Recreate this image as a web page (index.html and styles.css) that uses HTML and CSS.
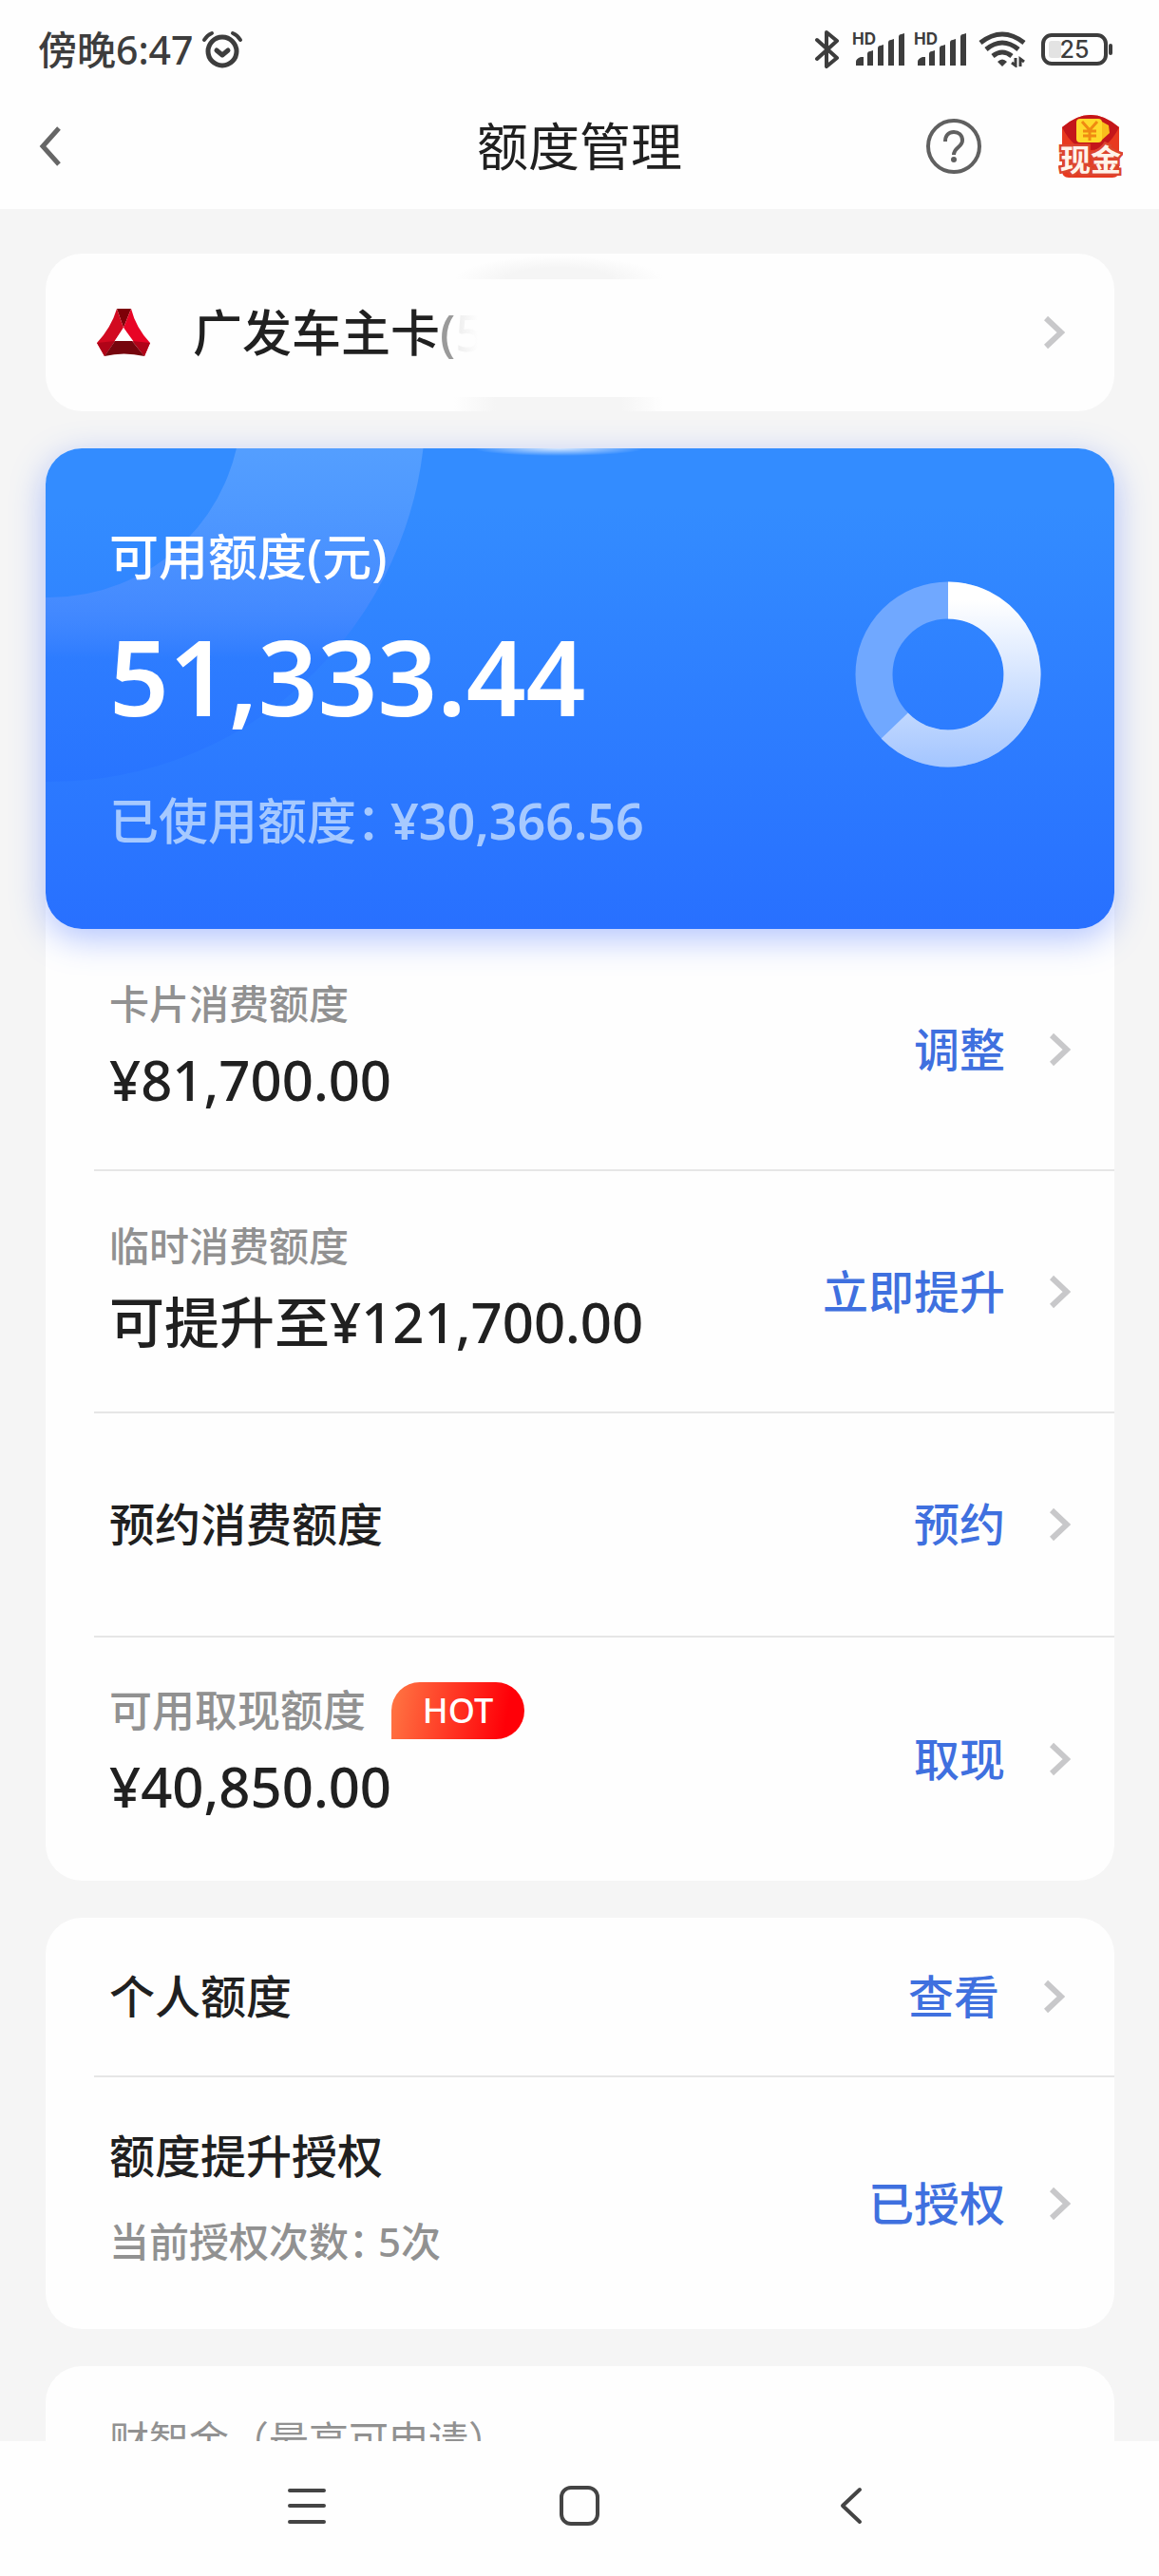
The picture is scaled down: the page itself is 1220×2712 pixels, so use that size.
FILE: index.html
```
<!DOCTYPE html>
<html lang="zh-CN">
<head>
<meta charset="utf-8">
<meta name="viewport" content="width=device-width, initial-scale=1">
<title>额度管理</title>
<link rel="stylesheet" href="styles.css">
</head>
<body>
<svg class="defs" width="0" height="0" aria-hidden="true">
  <symbol id="chevron" viewBox="0 0 22 36"><path d="M2 3 18 18 2 33" fill="none" stroke="#c8c8ca" stroke-width="6"/></symbol>
  <symbol id="signal" viewBox="0 0 52 34">
    <path d="M1 34v-4q0-3 5-5h3v9zM13 34V22q0-3 3-3l3-1v16zM24 34V16q0-3 3-3l3-1v22zM35 34V10q0-3 3-3l3-1v28zM46 34V4q0-3 3-3l3-1v34z" fill="#3d3d3d"/>
  </symbol>
</svg>
<div class="screen">
  <div class="status">
    <div class="status-left">
      <span class="time">傍晚6:47</span>
      <svg width="44" height="40" viewBox="0 0 44 40" fill="none" stroke="#3d3d3d" stroke-linecap="round">
        <circle cx="22" cy="22" r="15" stroke-width="5"/>
        <path d="M3 10Q6 5 11 3M41 10Q38 5 33 3" stroke-width="4"/>
        <path d="m16 21 6 5 6-5" stroke-width="5" stroke-linejoin="round"/>
      </svg>
    </div>
    <div class="status-right">
      <svg width="26" height="42" viewBox="0 0 26 42" fill="none" stroke="#3d3d3d" stroke-width="4" stroke-linejoin="round" stroke-linecap="round"><path d="M2 11 23 30 12 39V3l11 9L2 31"/></svg>
      <span class="cell"><span class="hd">HD</span><svg class="bars" width="52" height="34"><use href="#signal"/></svg></span>
      <span class="cell"><span class="hd">HD</span><svg class="bars" width="52" height="34"><use href="#signal"/></svg></span>
      <svg class="wifi" width="50" height="38" viewBox="0 0 50 38" fill="none" stroke="#3d3d3d" stroke-width="5">
        <path d="M2 12Q25-6 48 12M8 19Q25 5 42 19M15 26Q25 18 35 26"/>
        <path d="M20 32q5-5 10 0l-5 5z" fill="#3d3d3d" stroke="none"/>
        <path d="M39 28v8l-4-3M44 37v-8l4 3" stroke-width="3"/>
      </svg>
      <svg class="battery" width="76" height="34" viewBox="0 0 76 34">
        <rect x="2" y="2" width="66" height="30" rx="9" fill="none" stroke="#3d3d3d" stroke-width="4"/>
        <rect x="8" y="8" width="13" height="18" rx="3" fill="#e3e3e3"/>
        <rect x="71" y="11" width="4" height="12" rx="2" fill="#3d3d3d"/>
        <text x="35" y="26" text-anchor="middle" class="level">25</text>
      </svg>
    </div>
  </div>

  <header class="header">
    <button class="icon-btn" aria-label="返回">
      <svg width="28" height="44" viewBox="0 0 28 44"><path d="M24 3 7 22l17 19" fill="none" stroke="#666" stroke-width="5"/></svg>
    </button>
    <h1>额度管理</h1>
    <div class="tools">
      <button class="icon-btn" aria-label="帮助">
        <svg width="60" height="60" viewBox="0 0 60 60" fill="none" stroke="#606060" stroke-width="4">
          <circle cx="30" cy="30" r="27"/>
          <path d="M21 25c0-7 4-10 9-10s9 3 9 9c0 7-9 7-9 15"/>
          <circle cx="30" cy="44" r="3" fill="#606060" stroke="none"/>
        </svg>
      </button>
      <button class="icon-btn" aria-label="现金">
        <svg width="68" height="68" viewBox="0 0 68 68">
          <path d="M4 14Q34-12 64 14V60q0 7-7 7H11q-7 0-7-7z" fill="#e8391f"/>
          <path d="M4 14Q34-12 64 14Q52 38 34 38T4 14z" fill="#c4161a"/>
          <path d="m44 7 9 5 1 8-10 9z" fill="#f9bd1c"/>
          <rect x="19" y="5" width="27" height="25" rx="4" fill="#ffd92b"/>
          <path d="m25 8 8 9 8-9M33 17v11M26 18h14M26 23h14" fill="none" stroke="#f08a12" stroke-width="3"/>
          <text x="34" y="60" class="cash" text-anchor="middle">现金</text>
        </svg>
      </button>
    </div>
  </header>

  <main class="main">
    <a class="card picker" href="#card">
      <svg width="56" height="50" viewBox="0 0 56 50">
        <path d="M21 0h15L28 20z" fill="#7d0008"/>
        <path d="M21 0 28 20 8 50 0 36Q15 20 21 0z" fill="#d20a20"/>
        <path d="M36 0 28 20 50 50l6-14Q41 20 36 0z" fill="#e80425"/>
        <path d="M0 36 19 34 8 50zM56 36 37 34l13 16z" fill="#b00418"/>
        <path d="M19 34h18l13 16Q28 45 8 50z" fill="#76060d"/>
        <path d="m28 20-9 14h18z" fill="#fff"/>
      </svg>
      <span class="card-name">广发车主卡<span class="fade-a">(</span><span class="fade-b">5</span></span>
      <svg class="chev" width="22" height="36"><use href="#chevron"/></svg>
      <span class="smudge smudge-top"></span>
      <span class="smudge smudge-bottom"></span>
    </a>

    <section class="card">
      <div class="summary">
        <svg class="ring" width="404" height="356" viewBox="0 0 404 356">
          <defs><linearGradient id="rg" gradientUnits="userSpaceOnUse" x1="0" y1="0" x2="0" y2="356">
            <stop offset="0" stop-color="#fff" stop-opacity=".16"/>
            <stop offset=".4" stop-color="#c4b4ff" stop-opacity=".15"/>
            <stop offset=".62" stop-color="#2a70ff" stop-opacity=".3"/>
            <stop offset="1" stop-color="#2068ff" stop-opacity=".3"/>
          </linearGradient></defs>
          <circle cx="4" cy="-45" r="299" fill="none" stroke="url(#rg)" stroke-width="194"/>
        </svg>
        <div class="summary-text">
          <p class="summary-label">可用额度(元)</p>
          <p class="summary-value">51,333.44</p>
          <p class="summary-used"><span>已使用额度：</span><span class="used-amount">¥30,366.56</span></p>
        </div>
        <svg class="donut" width="196" height="196" viewBox="0 0 196 196" fill="none">
          <defs><linearGradient id="dg" gradientUnits="userSpaceOnUse" x1="0" y1="0" x2="0" y2="196">
            <stop offset=".1" stop-color="#fff"/><stop offset="1" stop-color="#a3c5ff"/>
          </linearGradient></defs>
          <circle cx="98" cy="98" r="78" stroke="#70a8ff" stroke-width="39"/>
          <path d="M98 20A78 78 0 1 1 41.700 152" stroke="url(#dg)" stroke-width="39"/>
        </svg>
        <span class="smudge smudge-blue"></span>
      </div>
      <div class="rows">
        <a class="row" href="#adjust">
          <span class="info"><span class="label">卡片消费额度</span><span class="value">¥81,700.00</span></span>
          <span class="action">调整</span><svg width="22" height="36"><use href="#chevron"/></svg>
        </a>
        <a class="row" href="#raise">
          <span class="info"><span class="label">临时消费额度</span><span class="value">可提升至¥121,700.00</span></span>
          <span class="action">立即提升</span><svg width="22" height="36"><use href="#chevron"/></svg>
        </a>
        <a class="row row-single" href="#book">
          <span class="info name">预约消费额度</span>
          <span class="action">预约</span><svg width="22" height="36"><use href="#chevron"/></svg>
        </a>
        <a class="row row-cash" href="#cash">
          <span class="info"><span class="label label-lg">可用取现额度<span class="hot">HOT</span></span><span class="value">¥40,850.00</span></span>
          <span class="action">取现</span><svg width="22" height="36"><use href="#chevron"/></svg>
        </a>
      </div>
    </section>

    <section class="card">
      <a class="row row-slim" href="#personal">
        <span class="info name">个人额度</span>
        <span class="action">查看</span><svg width="22" height="36"><use href="#chevron"/></svg>
      </a>
      <a class="row row-auth" href="#auth">
        <span class="info"><span class="name">额度提升授权</span><span class="note"><span>当前授权次数：</span><span>5次</span></span></span>
        <span class="action">已授权</span><svg width="22" height="36"><use href="#chevron"/></svg>
      </a>
    </section>

    <section class="card more"><p class="more-label">财智金（最高可申请）</p></section>
  </main>

  <nav class="sysnav">
    <button class="icon-btn" aria-label="最近任务"><svg width="42" height="42" viewBox="0 0 42 42"><path d="M3 5h36M3 21h36M3 38h36" stroke="#444" stroke-width="4" stroke-linecap="round"/></svg></button>
    <button class="icon-btn" aria-label="主屏幕"><svg width="42" height="42" viewBox="0 0 42 42"><rect x="2" y="2" width="38" height="38" rx="10" fill="none" stroke="#444" stroke-width="4"/></svg></button>
    <button class="icon-btn" aria-label="后退"><svg width="42" height="42" viewBox="0 0 42 42"><path d="M29 4 11 21l18 17" fill="none" stroke="#444" stroke-width="4" stroke-linecap="round" stroke-linejoin="round"/></svg></button>
  </nav>
</div>
</body>
</html>
```
FILE: styles.css
```
* { box-sizing: border-box; }
body {
  margin: 0;
  background: #f5f5f5;
  color: #202020;
  font-family: "Noto Sans", "Noto Sans CJK SC", sans-serif;
  font-weight: 500;
}
p, h1 { margin: 0; }
a { color: inherit; text-decoration: none; }
svg { display: block; flex: none; }
.defs { position: absolute; }
.screen { display: flex; flex-direction: column; height: 100vh; }

.status {
  display: flex;
  flex: none;
  justify-content: space-between;
  align-items: center;
  height: 104px;
  padding: 0 48px 0 40px;
  background: #fefefe;
  color: #3d3d3d;
}
.status-left { display: flex; align-items: center; gap: 8px; }
.time { font-size: 41px; line-height: 60px; }
.status-right { display: flex; align-items: center; gap: 13px; }
.cell { position: relative; display: flex; padding-left: 3px; }
.hd {
  position: absolute;
  left: 0;
  top: 0;
  font: 700 17px/12px Inter, sans-serif;
}
.cell + .cell { margin-left: -3px; }
.battery { margin-left: 3px; }
.level { font: 500 25px Inter, "Noto Sans", sans-serif; fill: #3d3d3d; }

.header {
  display: grid;
  grid-template-columns: 1fr auto 1fr;
  flex: none;
  align-items: center;
  height: 116px;
  padding: 0 38px 16px 38px;
  background: #fefefe;
}
.header h1 { font-size: 54px; line-height: 80px; font-weight: 400; }
.tools { display: flex; justify-content: flex-end; align-items: center; gap: 80px; }
.icon-btn {
  display: flex;
  justify-content: center;
  align-items: center;
  justify-self: start;
  padding: 0;
  border: 0;
  background: none;
}
.cash {
  font: 700 32px "Noto Sans CJK SC", sans-serif;
  fill: #fff3ea;
  stroke: #dc452f;
  stroke-width: 5px;
  paint-order: stroke;
}

.main {
  display: flex;
  flex: 1;
  flex-direction: column;
  gap: 39px;
  min-height: 0;
  padding: 47px 47px 0 48px;
  overflow: hidden;
}
.card { flex: none; border-radius: 38px; background: #fefefe; }
.picker {
  position: relative;
  display: flex;
  align-items: center;
  gap: 45px;
  padding: 44px 52px 44px 54px;
}
.card-name { flex: 1; font-size: 52px; line-height: 78px; }
.fade-a { color: #9a9a9a; }
.fade-b {
  background: linear-gradient(90deg, #ececec, #fefefe 80%);
  background-clip: text;
  color: transparent;
}
.smudge { position: absolute; }
.smudge-top {
  left: 430px;
  top: 0;
  width: 220px;
  height: 27px;
  background: radial-gradient(ellipse 50% 90% at 50% 100%, #f5f5f5 50%, #f5f5f500);
}
.smudge-bottom {
  left: 430px;
  bottom: 0;
  width: 220px;
  height: 15px;
  background: linear-gradient(90deg, #f5f5f500, #f5f5f5 20%, #f5f5f5 80%, #f5f5f500);
}
.smudge-blue {
  left: 450px;
  top: 0;
  width: 180px;
  height: 8px;
  background: radial-gradient(ellipse 50% 100% at 50% 0, #ffffffcc, #ffffff00);
}

.summary {
  position: relative;
  display: flex;
  justify-content: space-between;
  padding: 75px 77px 75px 67px;
  border-radius: 38px;
  overflow: hidden;
  background: linear-gradient(#338cff, #338cff 12%, #2e7fff 50%, #2870ff);
  box-shadow: 0 10px 36px rgba(62, 108, 255, .4);
  color: #fff;
}
.ring { position: absolute; left: 0; top: 0; }
.summary-text { position: relative; }
.summary-label { font-size: 52px; line-height: 78px; }
.summary-value { margin-top: 16px; font-size: 110px; font-weight: 600; line-height: 140px; }
.summary-used {
  display: flex;
  gap: 10px;
  margin-top: 44px;
  font-size: 52px;
  line-height: 78px;
  color: #a6c9ff;
  font-feature-settings: "halt";
}
.used-amount { font-weight: 600; }
.donut { margin-top: 65px; }

.row {
  display: flex;
  align-items: center;
  margin-left: 51px;
  padding: 0 46px 0 16px;
  border-bottom: 2px solid #e6e6e6;
}
.row:last-child { border-bottom: 0; }
.info { flex: 1; padding: 50px 0 55px; }
.label, .value { display: block; }
.label { font-size: 42px; line-height: 58px; color: #919191; }
.label-lg { display: flex; align-items: center; gap: 27px; font-size: 45px; }
.value { margin-top: 12px; font-size: 58px; line-height: 78px; }
.name { display: block; font-size: 48px; line-height: 58px; }
.action { margin-right: 47px; font-size: 48px; line-height: 58px; color: #3f70df; }
.hot {
  width: 140px;
  margin: -1px 0;
  border-radius: 30px 30px 30px 0;
  background: linear-gradient(100deg, #ff7744, #ff0008 85%);
  color: #fff;
  font-size: 36px;
  line-height: 60px;
  text-align: center;
}
.row-single .info { padding: 88px 0; }
.row-cash .info { padding: 48px 0 60px; }
.row-slim { padding-right: 52px; }
.row-slim .info { padding: 54px 0; }
.row-auth .info { padding: 54px 0 63px; }
.note {
  display: flex;
  gap: 10px;
  margin-top: 32px;
  font-size: 42px;
  line-height: 58px;
  color: #919191;
  font-feature-settings: "halt";
}
.more { padding: 49px 67px; }
.more-label { font-size: 42px; line-height: 58px; color: #919191; font-weight: 400; }

.sysnav {
  display: grid;
  grid-template-columns: repeat(3, 1fr);
  flex: none;
  justify-items: center;
  align-items: center;
  height: 142px;
  padding: 0 180px 6px;
  background: #fefefe;
}
.sysnav .icon-btn { justify-self: center; }
```
